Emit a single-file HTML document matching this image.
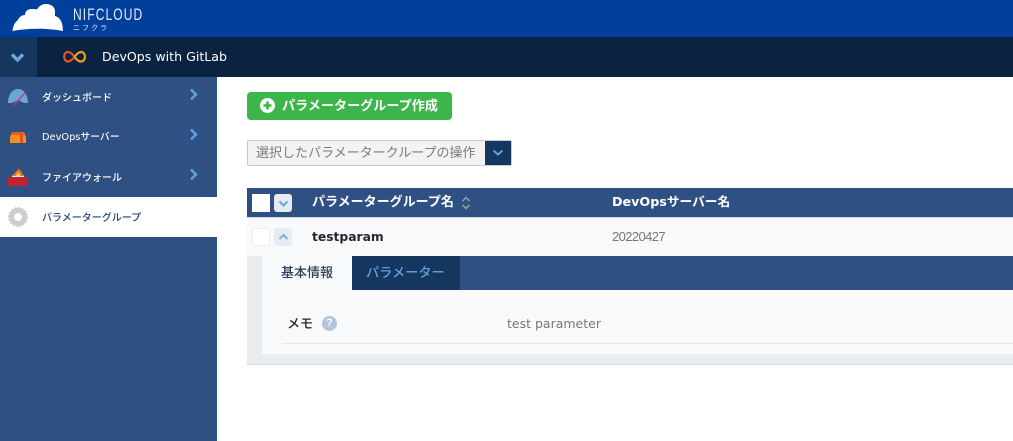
<!DOCTYPE html>
<html lang="ja"><head><meta charset="utf-8"><style>
*{box-sizing:border-box}
html,body{margin:0;padding:0;width:1013px;height:441px;overflow:hidden;background:#fff}
body{position:relative;font-family:"DejaVu Sans","Noto Sans CJK JP",sans-serif;font-size:13px}
.a{position:absolute;white-space:nowrap}
svg{position:absolute;overflow:visible}
</style></head><body>
<div class="a" style="left:0;top:0;width:1013px;height:37px;background:#00409c"></div>
<svg style="left:0;top:0" width="70" height="37"><path d="M12.500 31 C13 26 15 22 18 20 C19 17 22 15 25 15 C25 11 28 9 32 9 C34 9 36 9 37 9.500 C39 6 42 4 46 4 C51 4 55 7 55 11 C55 13 55 15 55 16 C59 17 62 21 62.500 26 L63 31 C48 28 28 28 12.500 31 Z" fill="#fff"/></svg>
<div class="a" style="left:72.500px;top:5px;font:16.500px/20px 'Liberation Sans',sans-serif;letter-spacing:1.500px;color:#e4ecf6;transform:scaleX(.73);transform-origin:0 0">NIFCLOUD</div>
<div class="a" style="left:73px;top:24px;font-size:7px;line-height:9px;letter-spacing:2px;color:#e4ecf6;font-family:'Noto Sans CJK JP',sans-serif">ニフクラ</div>

<div class="a" style="left:0;top:37px;width:1013px;height:40px;background:#0a2340"></div>
<div class="a" style="left:0;top:37px;width:37px;height:40px;background:#15375f"></div>
<svg style="left:10px;top:53px" width="16" height="10"><path d="M2 1.500 L7.500 7 L13 1.500" fill="none" stroke="#69a8dc" stroke-width="3.400"/></svg>
<svg style="left:63px;top:50px" width="24" height="14"><path d="M11.500 7 C8.500 2.500 6.500 2 4.500 2 C2.500 2 1.200 4.300 1.200 6.700 C1.200 9.200 2.700 11.500 5 11.500 C7.500 11.500 9 9.500 11.500 7" fill="none" stroke="#e8502a" stroke-width="2.200"/><path d="M11.500 7 C14 3.500 16 2 18 2 C20.500 2 22 4.300 22 6.700 C22 9.200 20.500 11.500 18 11.500 C15.500 11.500 14 10 11.500 7" fill="none" stroke="#f59a26" stroke-width="2.200"/></svg>
<div class="a" style="left:102px;top:48px;font-size:12.600px;line-height:18px;color:#fff">DevOps with GitLab</div>

<div class="a" style="left:0;top:77px;width:217px;height:364px;background:#2f5082"></div>
<div class="a" style="left:0;top:197px;width:217px;height:40px;background:#fff"></div>

<svg style="left:8px;top:88px" width="20" height="20"><path d="M0 15 C0 7 4 1 10 1 C16 1 20 7 20 15 L16 15 L10 12 L4 15 Z" fill="#6aa5da"/><path d="M6 17 L17 5" stroke="#c8337f" stroke-width="1.300"/></svg>
<div class="a" style="left:42px;top:92px;font-size:10px;line-height:14px;font-weight:500;color:#fff">ダッシュボード</div>
<svg style="left:189px;top:88px" width="10" height="14"><path d="M2 1.500 L7 6.500 L2 11.500" fill="none" stroke="#5f9fdb" stroke-width="2.600"/></svg>

<svg style="left:10px;top:132px" width="16" height="11"><path d="M0 11 L0 5 L2 0 L14 0 L16 5 L16 11 Z" fill="#f78f1e"/><path d="M10 3 H13 V11 H10 Z" fill="#d95b1c"/><path d="M2 0 H14 L15 3 H1 Z" fill="#f05a22"/></svg>
<div class="a" style="left:42px;top:131px;font-size:9.800px;line-height:14px;font-weight:500;color:#fff">DevOpsサーバー</div>
<svg style="left:189px;top:128px" width="10" height="14"><path d="M2 1.500 L7 6.500 L2 11.500" fill="none" stroke="#5f9fdb" stroke-width="2.600"/></svg>

<svg style="left:8px;top:168px" width="20" height="18"><rect x="0" y="9" width="20" height="9" fill="#bd2430"/><rect x="4" y="7.500" width="12" height="1.500" fill="#e8e4d8"/><path d="M5.500 8 C5 5 8 5 8 3 C9 3.500 10 2 10.500 0 C12 3 15 4 14.500 8 Z" fill="#f4731f"/><path d="M8 8 C8 6.500 10 6 10 4.500 C11 5.500 12.500 6.500 12 8 Z" fill="#fbd84a"/></svg>
<div class="a" style="left:42px;top:172px;font-size:10px;line-height:14px;font-weight:500;color:#fff">ファイアウォール</div>
<svg style="left:189px;top:168px" width="10" height="14"><path d="M2 1.500 L7 6.500 L2 11.500" fill="none" stroke="#5f9fdb" stroke-width="2.600"/></svg>

<svg style="left:8px;top:207px" width="20" height="20"><circle cx="10" cy="10" r="6.500" fill="none" stroke="#cdcdcd" stroke-width="5"/><circle cx="10" cy="10" r="9" fill="none" stroke="#cdcdcd" stroke-width="2" stroke-dasharray="2 1.500"/></svg>
<div class="a" style="left:42px;top:212px;font-size:10px;line-height:14px;font-weight:500;color:#26436f">パラメーターグループ</div>

<div class="a" style="left:247px;top:92px;width:205px;height:28px;background:#3cb54a;border-radius:4px"></div>
<svg style="left:260px;top:98px" width="15" height="15"><circle cx="7.500" cy="7.500" r="7.500" fill="#fff"/><path d="M7.500 3.500 V11.500 M3.500 7.500 H11.500" stroke="#3cb54a" stroke-width="2.600"/></svg>
<div class="a" style="left:282px;top:98px;font-size:13.100px;line-height:17px;font-weight:700;color:#fff">パラメーターグループ作成</div>

<div class="a" style="left:247px;top:140px;width:265px;height:26px;background:#f3f3f3;border:1px solid #c9c9c9;border-radius:2px"></div>
<div class="a" style="left:485px;top:141px;width:26px;height:24px;background:#15375f"></div>
<svg style="left:492px;top:149px" width="12" height="8"><path d="M1.500 1.500 L6 5.500 L10.500 1.500" fill="none" stroke="#5f9fdb" stroke-width="2"/></svg>
<div class="a" style="left:256px;top:145px;font-size:13px;line-height:18px;color:#7b7b7b">選択したパラメータークループの操作</div>

<div class="a" style="left:247px;top:188px;width:766px;height:29px;background:#2f5082"></div>
<div class="a" style="left:252px;top:194px;width:18px;height:18px;background:#fff"></div>
<div class="a" style="left:274px;top:194px;width:18px;height:18px;background:#e6ecf3;border-radius:3px"></div>
<svg style="left:278px;top:200px" width="11" height="8"><path d="M1.500 1.500 L5.500 5.500 L9.500 1.500" fill="none" stroke="#6aa5da" stroke-width="2"/></svg>
<div class="a" style="left:312px;top:194px;font-size:13px;line-height:18px;font-weight:700;color:#fff">パラメーターグループ名</div>
<svg style="left:461px;top:196px" width="10" height="14"><path d="M1.500 5 L5 1.500 L8.500 5" fill="none" stroke="#7fa3c8" stroke-width="1.500"/><path d="M1.500 9 L5 12.500 L8.500 9" fill="none" stroke="#a7a88c" stroke-width="1.500"/></svg>
<div class="a" style="left:612px;top:193px;font-size:12.700px;line-height:18px;font-weight:700;color:#fff">DevOpsサーバー名</div>

<div class="a" style="left:247px;top:217px;width:766px;height:39px;background:#f8f9fa;border-top:1px solid #d5dce6"></div>
<div class="a" style="left:252px;top:228px;width:18px;height:18px;background:#fff;border:1px solid #ececec;border-radius:2px"></div>
<div class="a" style="left:274px;top:228px;width:18px;height:18px;background:#e6ecf3;border-radius:3px"></div>
<svg style="left:278px;top:233px" width="11" height="8"><path d="M1.500 6 L5.500 2 L9.500 6" fill="none" stroke="#80b0de" stroke-width="2"/></svg>
<div class="a" style="left:312px;top:228px;font-size:12.300px;line-height:18px;font-weight:700;color:#25272b">testparam</div>
<div class="a" style="left:612px;top:228px;font-family:'Liberation Sans',sans-serif;font-size:13px;letter-spacing:-.6px;line-height:18px;color:#777">20220427</div>

<div class="a" style="left:247px;top:256px;width:766px;height:108px;background:#e9edf0"></div>
<div class="a" style="left:247px;top:364px;width:766px;height:1px;background:#d5dade"></div>
<div class="a" style="left:262px;top:256px;width:751px;height:98px;background:#f8f9fa"></div>
<div class="a" style="left:352px;top:256px;width:661px;height:34px;background:#2f5082"></div>
<div class="a" style="left:352px;top:256px;width:108px;height:34px;background:#15375f"></div>
<div class="a" style="left:281px;top:265px;font-size:13px;line-height:18px;font-weight:500;color:#2b3f5c">基本情報</div>
<div class="a" style="left:366px;top:265px;font-size:13.200px;line-height:18px;font-weight:500;color:#5f9fdb">パラメーター</div>

<div class="a" style="left:287px;top:316px;font-size:13px;line-height:18px;color:#25272b;font-weight:500">メモ</div>
<svg style="left:322px;top:316px" width="15" height="15"><circle cx="7.500" cy="7.500" r="7.500" fill="#b3c5dc"/></svg>
<div class="a" style="left:322px;top:316px;width:15px;height:15px;text-align:center;font:700 11px/15px 'Liberation Sans',sans-serif;color:#fff">?</div>
<div class="a" style="left:507px;top:315px;font-size:12.500px;line-height:18px;color:#777">test parameter</div>
<div class="a" style="left:282px;top:343px;width:731px;height:1px;background:#e6e8ea"></div>
</body></html>
